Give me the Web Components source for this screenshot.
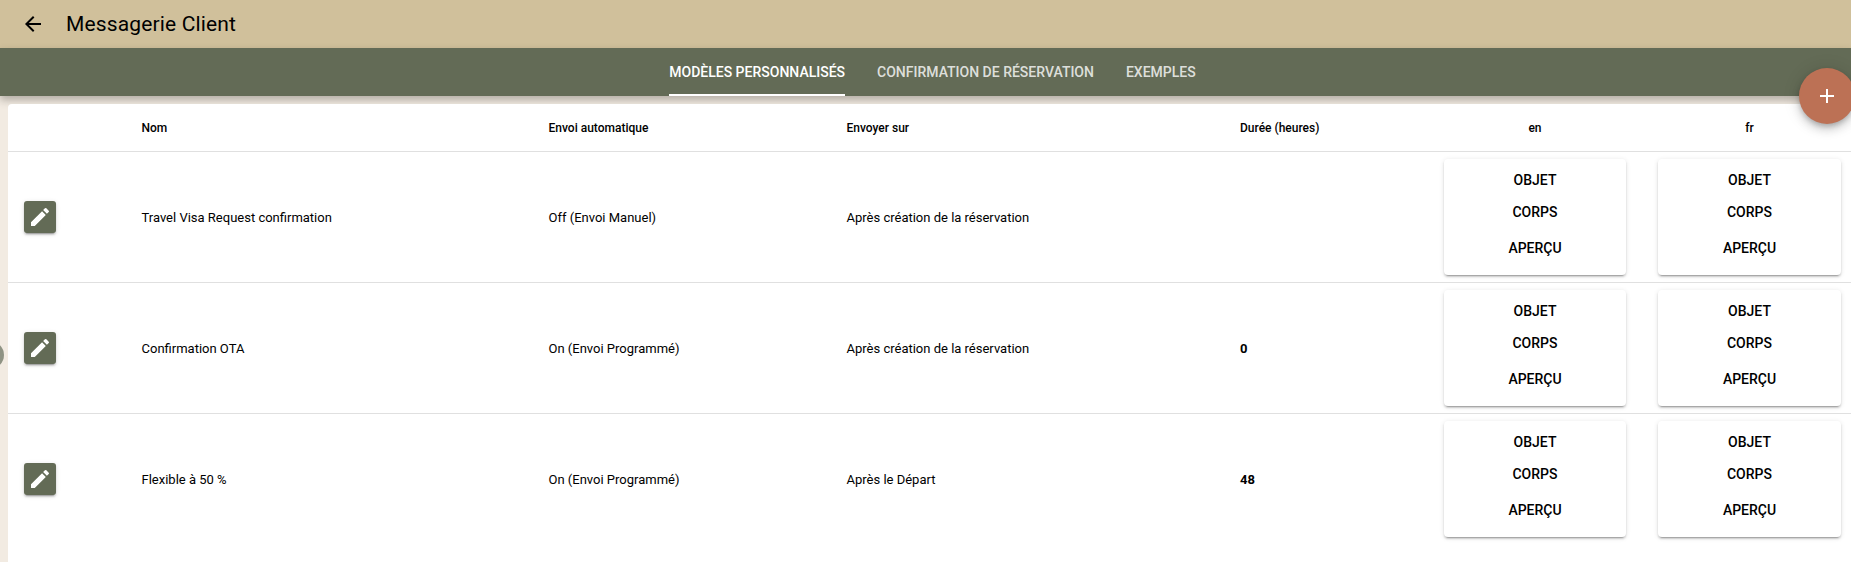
<!DOCTYPE html>
<html lang="fr">
<head>
<meta charset="utf-8">
<title>Messagerie Client</title>
<style>
  html, body { margin: 0; height: 100%; overflow: hidden; }
  body { background: #f2ebe2; font-family: Roboto, "Liberation Sans", sans-serif; color: #000; }
</style>
</head>
<body>
<template id="edit-icon">
  <svg viewBox="0 0 24 24" width="24" height="24" fill="#fff"><path d="M3 17.25V21h3.75L17.81 9.94l-3.75-3.75L3 17.25zM20.71 7.04a1 1 0 0 0 0-1.41l-2.34-2.34a1 1 0 0 0-1.41 0l-1.83 1.83 3.75 3.75 1.83-1.83z"/></svg>
</template>

<msg-app>
  <msg-row name="Travel Visa Request confirmation" mode="Off (Envoi Manuel)" trigger="Après création de la réservation" hours=""></msg-row>
  <msg-row name="Confirmation OTA" mode="On (Envoi Programmé)" trigger="Après création de la réservation" hours="0"></msg-row>
  <msg-row class="last" name="Flexible à 50 %" mode="On (Envoi Programmé)" trigger="Après le Départ" hours="48"></msg-row>
</msg-app>

<script>
// grid shared by the header and every row
const COLUMNS = '133.5px 407px 298px 393.5px 188px 214px 209px';

class MsgToolbar extends HTMLElement {
  constructor() {
    super();
    this.attachShadow({ mode: 'open' });
    this.shadowRoot.innerHTML = `
      <style>
        :host { display: flex; align-items: center; height: 48px; padding-left: 21px; background: #d0c09b; }
        svg { display: block; }
        h1 { margin: 0 0 0 21px; font: 400 21px/24px Roboto, sans-serif; letter-spacing: .15px; color: #000; }
      </style>
      <svg viewBox="0 0 24 24" width="24" height="24"><path d="M20 11H7.83l5.59-5.59L12 4l-8 8 8 8 1.41-1.41L7.83 13H20v-2z"/></svg>
      <h1><slot></slot></h1>
    `;
  }
}

class MsgTabs extends HTMLElement {
  constructor() {
    super();
    this.attachShadow({ mode: 'open' });
    this.shadowRoot.innerHTML = `
      <style>
        :host { display: flex; justify-content: center; height: 48px; padding-left: 14px; background: #636b56; box-shadow: 0 4px 8px rgba(30,25,20,.3); }
        .tab { display: flex; align-items: center; margin: 0 16px; height: 48px; box-sizing: border-box; font: 500 14px/16px Roboto, sans-serif; text-transform: uppercase; color: rgba(255,255,255,.8); }
        .tab.active { color: #fff; border-bottom: 2px solid #fff; padding-top: 2px; }
      </style>
      <div class="tab active">Modèles personnalisés</div>
      <div class="tab">Confirmation de réservation</div>
      <div class="tab">Exemples</div>
    `;
  }
}

class MsgFab extends HTMLElement {
  constructor() {
    super();
    this.attachShadow({ mode: 'open' });
    this.shadowRoot.innerHTML = `
      <style>
        :host { position: absolute; left: 1799px; top: 68px; width: 56px; height: 56px; border-radius: 50%; background: #bc7155; display: flex; align-items: center; justify-content: center; box-shadow: 0 3px 5px -1px rgba(0,0,0,.2), 0 6px 10px 0 rgba(0,0,0,.14), 0 1px 18px 0 rgba(0,0,0,.12); }
      </style>
      <svg viewBox="0 0 24 24" width="24" height="24" fill="#fff"><path d="M19 13h-6v6h-2v-6H5v-2h6V5h2v6h6v2z"/></svg>
    `;
  }
}

class MsgCard extends HTMLElement {
  constructor() {
    super();
    this.attachShadow({ mode: 'open' });
    this.shadowRoot.innerHTML = `
      <style>
        :host { display: flex; flex-direction: column; align-items: center; height: 116px; background: #fff; border-radius: 4px; box-shadow: 0 3px 1px -2px rgba(0,0,0,.2), 0 2px 2px 0 rgba(0,0,0,.14), 0 1px 5px 0 rgba(0,0,0,.12); font: 500 14px/16px Roboto, sans-serif; }
        div { color: #000; }
        .a { margin-top: 13px; }
        .b { margin-top: 16px; }
        .c { margin-top: 20px; }
      </style>
      <div class="a">OBJET</div>
      <div class="b">CORPS</div>
      <div class="c">APERÇU</div>
    `;
  }
}

class MsgHead extends HTMLElement {
  constructor() {
    super();
    this.attachShadow({ mode: 'open' });
    this.shadowRoot.innerHTML = `
      <style>
        :host { display: grid; grid-template-columns: ${COLUMNS}; align-items: center; height: 47px; border-bottom: 1px solid #e0e0e0; font: 500 12px/16px Roboto, sans-serif; }
        .lang { text-align: center; }
        .fr { padding-right: 10px; padding-left: 16px; }
      </style>
      <span></span><span>Nom</span><span>Envoi automatique</span><span>Envoyer sur</span><span>Durée (heures)</span>
      <span class="lang">en</span><span class="lang fr">fr</span>
    `;
  }
}

class MsgRow extends HTMLElement {
  constructor() {
    super();
    this.attachShadow({ mode: 'open' });
    const attr = n => this.getAttribute(n) || '';
    this.shadowRoot.innerHTML = `
      <style>
        :host { display: grid; grid-template-columns: ${COLUMNS}; align-items: center; height: 130px; border-bottom: 1px solid #e0e0e0; font: 400 13px/16px Roboto, sans-serif; }
        :host(.last) { border-bottom: 0; }
        span { padding-top: 2px; }
        .edit { display: flex; align-items: center; justify-content: center; width: 32px; height: 32px; margin-left: 16px; background: #636b56; border-radius: 3px; box-shadow: 0 3px 1px -2px rgba(0,0,0,.2), 0 2px 2px 0 rgba(0,0,0,.14), 0 1px 5px 0 rgba(0,0,0,.12); }
        .hours { font-weight: 700; }
        msg-card { margin-left: 16px; margin-right: 16px; }
        msg-card.fr { margin-right: 10px; }
      </style>
      <div class="edit"></div>
      <span>${attr('name')}</span>
      <span>${attr('mode')}</span>
      <span>${attr('trigger')}</span>
      <span class="hours">${attr('hours')}</span>
      <msg-card></msg-card>
      <msg-card class="fr"></msg-card>
    `;
    this.shadowRoot.querySelector('.edit').appendChild(document.getElementById('edit-icon').content.cloneNode(true));
  }
}

class MsgApp extends HTMLElement {
  constructor() {
    super();
    this.attachShadow({ mode: 'open' });
    this.shadowRoot.innerHTML = `
      <style>
        :host { display: block; position: relative; height: 562px; overflow: hidden; }
        .sheet { position: relative; margin: 8px 0 0 8px; height: 458px; background: #fff; border-radius: 4px 0 0 0; overflow: hidden; }
        .handle { position: absolute; left: -24px; top: 341px; width: 28px; height: 28px; border-radius: 50%; background: #8f9384; }
      </style>
      <msg-toolbar>Messagerie Client</msg-toolbar>
      <msg-tabs></msg-tabs>
      <div class="handle"></div>
      <div class="sheet">
        <msg-head></msg-head>
        <slot></slot>
      </div>
      <msg-fab></msg-fab>
    `;
  }
}

customElements.define('msg-toolbar', MsgToolbar);
customElements.define('msg-tabs', MsgTabs);
customElements.define('msg-fab', MsgFab);
customElements.define('msg-card', MsgCard);
customElements.define('msg-head', MsgHead);
customElements.define('msg-row', MsgRow);
customElements.define('msg-app', MsgApp);
</script>
</body>
</html>
